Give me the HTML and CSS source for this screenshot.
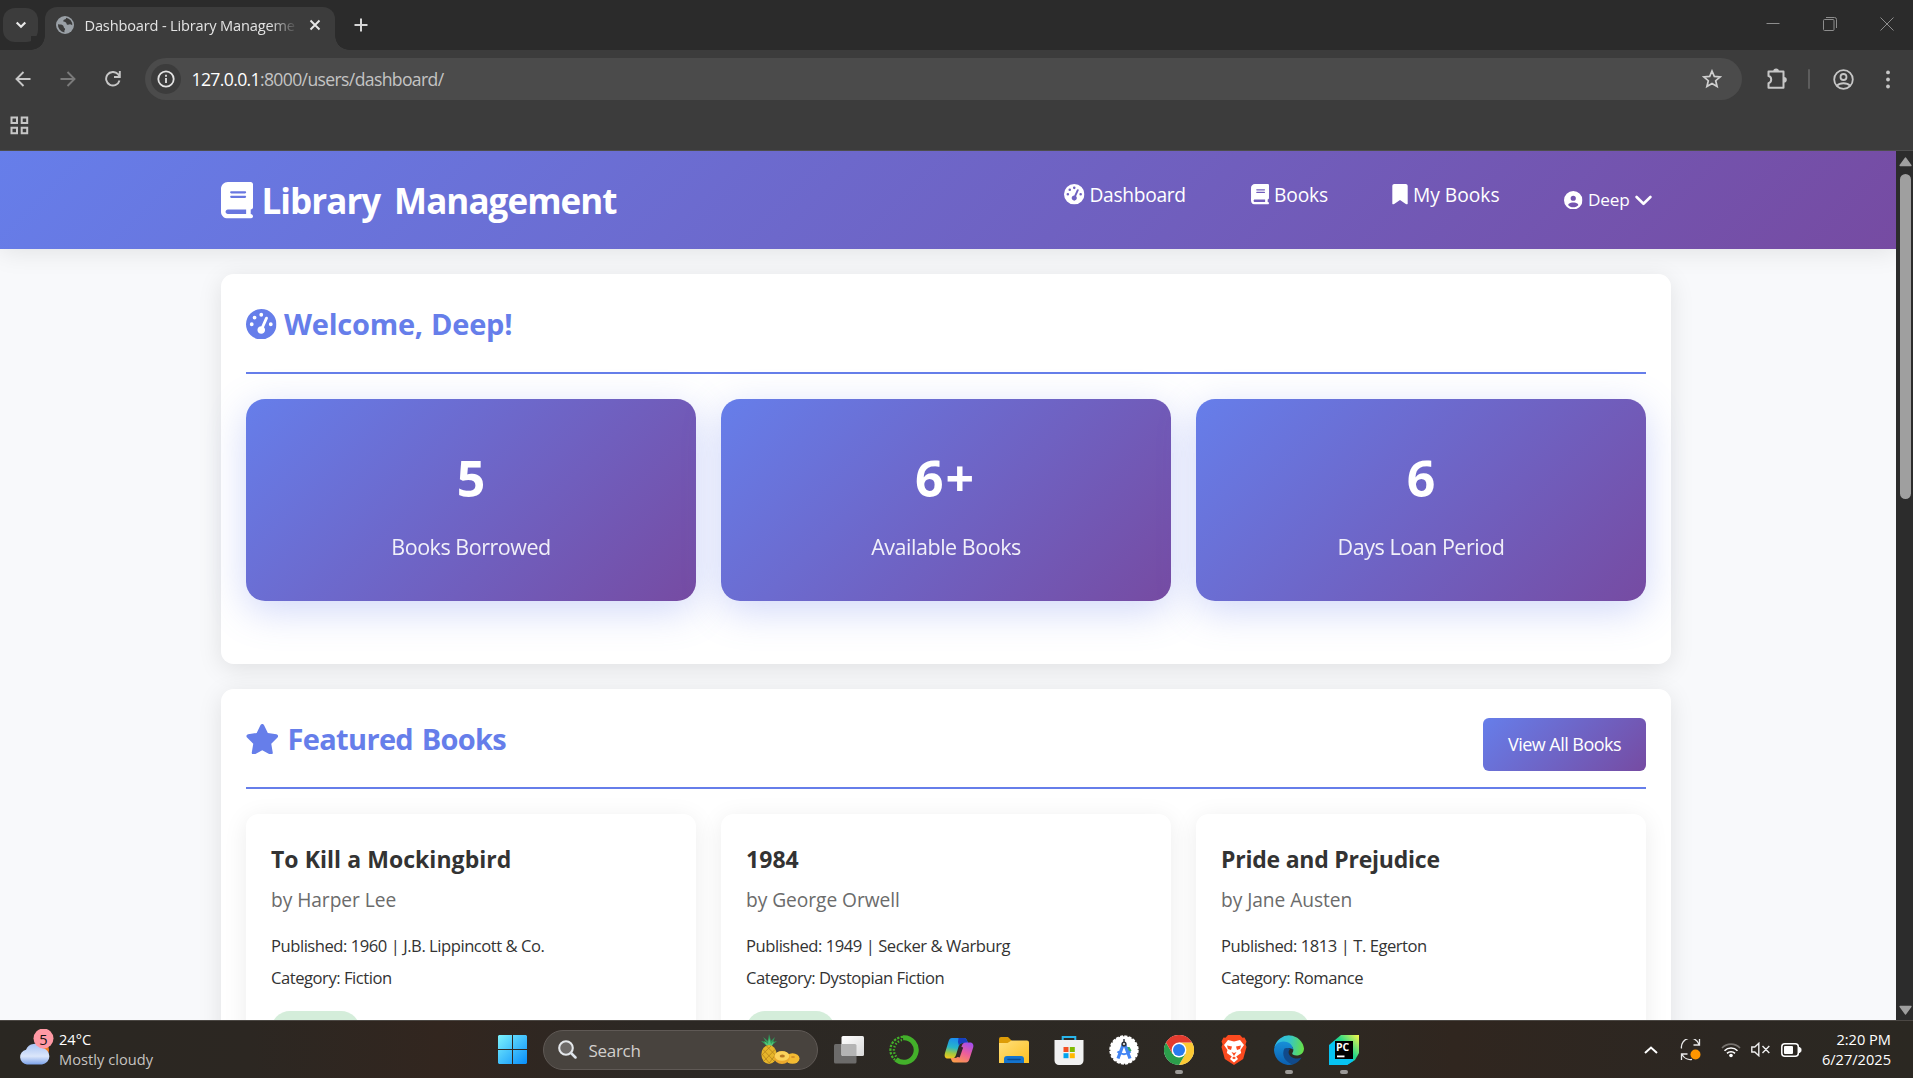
FILE: index.html
```
<!DOCTYPE html>
<html lang="en">
<head>
<meta charset="utf-8">
<title>Dashboard - Library Management</title>
<link rel="stylesheet" href="styles.css">
</head>
<body>
<svg class="defs" aria-hidden="true">
  <symbol id="book" viewBox="0 0 448 512"><path fill-rule="evenodd" d="M96 0C43 0 0 43 0 96V416c0 53 43 96 96 96H384h32c17.7 0 32-14.3 32-32s-14.3-32-32-32V384c17.7 0 32-14.3 32-32V32c0-17.7-14.3-32-32-32H384 96zm0 384H352v64H96c-17.7 0-32-14.3-32-32s14.3-32 32-32zm32-240c0-8.8 7.2-16 16-16H336c8.8 0 16 7.2 16 16s-7.2 16-16 16H144c-8.8 0-16-7.2-16-16zm16 48H336c8.8 0 16 7.2 16 16s-7.2 16-16 16H144c-8.8 0-16-7.2-16-16s7.2-16 16-16z"/></symbol>
  <symbol id="gauge" viewBox="0 0 512 512"><path fill-rule="evenodd" d="M0 256a256 256 0 1 1 512 0A256 256 0 1 1 0 256zM288 96a32 32 0 1 0-64 0 32 32 0 1 0 64 0zM256 416c35.3 0 64-28.7 64-64c0-17.4-6.9-33.1-18.1-44.6L366 161.7c5.3-12.1-.2-26.3-12.3-31.6s-26.3 .2-31.6 12.3L257.9 288c-.6 0-1.3 0-1.9 0c-35.3 0-64 28.7-64 64s28.7 64 64 64zM176 144a32 32 0 1 0-64 0 32 32 0 1 0 64 0zM96 288a32 32 0 1 0 0-64 32 32 0 1 0 0 64zm352-32a32 32 0 1 0-64 0 32 32 0 1 0 64 0z"/></symbol>
  <symbol id="bookmark" viewBox="0 0 384 512"><path d="M0 48V487.700C0 501.100 10.900 512 24.300 512c5 0 9.900-1.500 14-4.400L192 400 345.700 507.600c4.100 2.900 9 4.400 14 4.400c13.400 0 24.300-10.900 24.300-24.300V48c0-26.500-21.500-48-48-48H48C21.500 0 0 21.500 0 48z"/></symbol>
  <symbol id="user" viewBox="0 0 512 512"><path fill-rule="evenodd" d="M399 384.200C376.900 345.800 335.400 320 288 320H224c-47.400 0-88.900 25.800-111 64.200c35.200 39.200 86.200 63.800 143 63.800s107.800-24.700 143-63.800zM0 256a256 256 0 1 1 512 0A256 256 0 1 1 0 256zm256 16a72 72 0 1 0 0-144 72 72 0 1 0 0 144z"/></symbol>
  <symbol id="star" viewBox="0 0 576 512"><path d="M316.900 18C311.600 7 300.400 0 288.100 0s-23.400 7-28.800 18L195 150.300 51.400 171.500c-12 1.800-22 10.200-25.700 21.700s-.7 24.200 7.900 32.700L137.800 329 113.200 474.700c-2 12 3 24.200 12.900 31.300s23 8 33.800 2.300l128.300-68.500 128.300 68.500c10.800 5.700 23.900 4.900 33.800-2.300s14.900-19.300 12.900-31.300L438.500 329 542.700 225.900c8.600-8.500 11.700-21.200 7.900-32.700s-13.700-19.900-25.700-21.700L381.200 150.300 316.900 18z"/></symbol>
</svg>

<div class="browser">
  <div class="tabstrip">
    <div class="tab-search"><svg width="12" height="8" viewBox="0 0 12 8"><path d="M1.700 1.500 6 5.800l4.300-4.300" fill="none" stroke="#e8e8e8" stroke-width="2.200"/></svg></div>
    <div class="tab">
      <svg width="18" height="18" viewBox="0 0 18 18"><circle cx="9" cy="9" r="9" fill="#9aa0a6"/><path d="M2 8.200c2.700.2 4.200.2 5.100 1.300.8 1 .4 2.200 1.500 2.800.8.500.6 1.500-.2 2.200v1.900A7.500 7.500 0 0 1 2 8.200zM10.200 1.700c-.4 1-.2 1.700-1.500 1.800-1.300.2-1.400 1.100-1.300 1.800.2 1 1.600.6 2.500 1.100.9.600.3 2 1.600 2.300 1.200.4 1.600-.6 2.700-.4.900.2 1.500.8 2.100 1A7.500 7.500 0 0 0 10.200 1.700z" fill="#3c3c3c"/></svg>
      <span class="tab-title">Dashboard - Library Manageme</span>
      <svg class="tab-close" width="12" height="12" viewBox="0 0 12 12"><path d="m1.500 1.500 9 9m0-9-9 9" stroke="#e8e8e8" stroke-width="1.900"/></svg>
    </div>
    <svg class="newtab" width="14" height="14" viewBox="0 0 14 14"><path d="M7 .5v13M.5 7h13" stroke="#d6d6d6" stroke-width="2"/></svg>
    <div class="winctl">
      <svg width="14" height="14" viewBox="0 0 14 14"><path d="M.5 6.500h13" stroke="#8d8d8d"/></svg>
      <svg width="14" height="14" viewBox="0 0 14 14" fill="none" stroke="#8d8d8d"><rect x=".5" y="2.500" width="10.500" height="11" rx="1"/><path d="M3 .5h8.500a2 2 0 0 1 2 2V11"/></svg>
      <svg width="14" height="14" viewBox="0 0 14 14"><path d="m.5.5 13 13m0-13-13 13" stroke="#8d8d8d"/></svg>
    </div>
  </div>
  <div class="toolbar">
    <svg class="back" width="16" height="16" viewBox="0 0 16 16" fill="none" stroke="#c7c7c7" stroke-width="1.900"><path d="M15.500 8H2M8.500 1 1.500 8l7 7"/></svg>
    <svg class="fwd" width="16" height="16" viewBox="0 0 16 16" fill="none" stroke="#7a7a7a" stroke-width="1.900"><path d="M.5 8H14M7.500 1l7 7-7 7"/></svg>
    <svg class="reload" width="16" height="16" viewBox="0 0 16 16" fill="none" stroke="#c7c7c7" stroke-width="1.900"><path d="M14.500 9.500A6.800 6.800 0 1 1 13 3.200l1.500 2M14.800 0v6H9"/></svg>
    <div class="omnibox">
      <div class="info"><svg width="18" height="18" viewBox="0 0 18 18"><circle cx="9" cy="9" r="7.700" fill="none" stroke="#e3e3e3" stroke-width="1.800"/><path d="M9 8v5M9 4.800v1.900" stroke="#e3e3e3" stroke-width="1.800"/></svg></div>
      <span class="url"><b>127.0.0.1</b>:8000/users/dashboard/</span>
      <svg class="fav" width="20" height="20" viewBox="0 0 20 20"><path d="m10 2 2.300 5.400 5.900.5-4.500 3.800 1.400 5.800L10 14.400l-5.100 3.100 1.400-5.800L1.800 7.900l5.900-.5z" fill="none" stroke="#cfcfcf" stroke-width="1.700"/></svg>
    </div>
    <svg class="ext" width="22" height="22" viewBox="0 0 22 22"><path d="M2.500 3.500H17.500V19.800H2.500v-4.600c3.600-.7 3.600-6.500 0-7.200z" fill="none" stroke="#c7c7c7" stroke-width="2" stroke-linejoin="round"/><path d="M7.300 3.300a2.800 2.800 0 0 1 5.600 0zM18 9a2.800 2.800 0 0 1 0 5.600z" fill="#c7c7c7"/></svg>
    <i class="sep"></i>
    <svg class="profile" width="21" height="21" viewBox="0 0 21 21" fill="none" stroke="#c7c7c7" stroke-width="1.800"><circle cx="10.500" cy="10.500" r="9.300"/><circle cx="10.500" cy="8" r="3"/><path d="M4 16.700c3-3.300 10-3.300 13 0"/></svg>
    <svg class="dots" width="4" height="19" viewBox="0 0 4 19" fill="#c7c7c7"><circle cx="2" cy="2.400" r="1.900"/><circle cx="2" cy="9.500" r="1.900"/><circle cx="2" cy="16.500" r="1.900"/></svg>
  </div>
  <div class="bookmarks"><svg width="19" height="19" viewBox="0 0 19 19" fill="none" stroke="#c7c7c7" stroke-width="2"><path d="M1.500 1.500h5.500v5.500H1.500zM11.700 1.500h5.500v5.500h-5.500zM1.500 11.700h5.500v5.500H1.500zM11.700 11.700h5.500v5.500h-5.500z"/></svg></div>
</div>

<div class="viewport">
  <div class="page">
    <header class="site-header">
      <h1 class="logo"><svg width="32" height="36.600"><use href="#book"/></svg>Library Management</h1>
      <nav class="nav">
        <a class="n-dash"><svg width="20.500" height="20.500"><use href="#gauge"/></svg>Dashboard</a>
        <a class="n-books"><svg width="18" height="20.500"><use href="#book"/></svg>Books</a>
        <a class="n-my"><svg width="16" height="20.500"><use href="#bookmark"/></svg>My Books</a>
        <a class="n-user"><svg width="18.500" height="18.500"><use href="#user"/></svg>Deep<svg class="chev" width="17" height="11" viewBox="0 0 17 11"><path d="m1.600 2 6.900 6.800L15.400 2" fill="none" stroke="#fff" stroke-width="2.600" stroke-linecap="round" stroke-linejoin="round"/></svg></a>
      </nav>
    </header>
    <main>
      <section class="card">
        <div class="card-head"><h2 class="welcome"><svg width="30.500" height="30.500"><use href="#gauge"/></svg>Welcome, Deep!</h2></div>
        <div class="stats">
          <div class="stat"><div class="num">5</div><div class="label">Books Borrowed</div></div>
          <div class="stat"><div class="num">6<span class="plus">+</span></div><div class="label">Available Books</div></div>
          <div class="stat"><div class="num">6</div><div class="label">Days Loan Period</div></div>
        </div>
      </section>
      <section class="card featured">
        <div class="card-head"><h2><svg class="star" width="34.500" height="30.700"><use href="#star"/></svg>Featured Books</h2><a class="btn">View All Books</a></div>
        <div class="books">
          <article class="book"><h3>To Kill a Mockingbird</h3><p class="author">by Harper Lee</p><p>Published: 1960 | J.B. Lippincott &amp; Co.</p><p>Category: Fiction</p><span class="badge"></span></article>
          <article class="book"><h3>1984</h3><p class="author">by George Orwell</p><p>Published: 1949 | Secker &amp; Warburg</p><p>Category: Dystopian Fiction</p><span class="badge"></span></article>
          <article class="book"><h3 class="snug">Pride and Prejudice</h3><p class="author">by Jane Austen</p><p>Published: 1813 | T. Egerton</p><p>Category: Romance</p><span class="badge"></span></article>
        </div>
      </section>
    </main>
  </div>
  <div class="scrollbar">
    <svg width="13" height="10" viewBox="0 0 13 10"><path d="M6.500 1.200 11.800 8.500H1.200z" fill="#9f9f9f" stroke="#9f9f9f" stroke-width="1.600" stroke-linejoin="round"/></svg>
    <i class="thumb"></i>
    <svg width="13" height="10" viewBox="0 0 13 10"><path d="M6.500 8.800 11.800 1.500H1.200z" fill="#9f9f9f" stroke="#9f9f9f" stroke-width="1.600" stroke-linejoin="round"/></svg>
  </div>
</div>

<footer class="taskbar">
  <div class="weather">
    <svg width="36" height="38" viewBox="0 0 36 38">
      <defs><linearGradient id="cl" x1="0" y1="0" x2="0" y2="1"><stop offset="0" stop-color="#a9c4f5"/><stop offset=".6" stop-color="#dbe6fa"/><stop offset="1" stop-color="#7da3ea"/></linearGradient></defs>
      <circle cx="22" cy="21" r="8" fill="#f47b20"/>
      <path d="M8 35.500a7.500 7.500 0 0 1-1-14.800 9 9 0 0 1 16-1.700 8.300 8.300 0 0 1 0 16.500z" fill="url(#cl)"/>
      <circle cx="24.500" cy="9.500" r="10" fill="#ff99a4"/>
    </svg><span class="count">5</span>
    <div class="wtext"><span>24°C</span><span class="dim">Mostly cloudy</span></div>
  </div>
  <div class="apps">
    <svg class="start" width="29" height="29" viewBox="0 0 29 29"><defs><linearGradient id="wn" x1="0" y1="0" x2="1" y2="1"><stop offset="0" stop-color="#7df3fc"/><stop offset="1" stop-color="#078dfb"/></linearGradient></defs><path d="M1 0h13v14H0V1zM15 0h13l1 1v13H15zM0 15h14v14H1l-1-1zM15 15h14v13l-1 1H15z" fill="url(#wn)"/></svg>
    <div class="search">
      <svg width="19" height="19" viewBox="0 0 19 19"><circle cx="8" cy="8" r="6.800" fill="#6d6a68" stroke="#e4e7ea" stroke-width="2.100"/><path d="m13 13 4.500 4.500" stroke="#dde3ea" stroke-width="2.500" stroke-linecap="round"/></svg>
      <span>Search</span>
      <svg class="pine" width="40" height="31" viewBox="0 0 40 31">
        <path d="M7 12 1 7l5 1-3-5 5 4 1-7 2 7 4-4-2 5 4-1-6 5z" fill="#2f9e5b"/><path d="M6 11 4 7l4 3 1-6 2 6 3-3-2 5z" fill="#57c47c"/>
        <ellipse cx="9" cy="20.500" rx="7.600" ry="9.500" fill="#e5b52a"/><path d="M3 15.500 14 27M6.500 12 16.300 22M2 20l7.500 9.300M15 15.500 4 27M11 12 1.800 21M16 20l-7 9.300" stroke="#b5831b" stroke-width=".8"/>
        <ellipse cx="32.500" cy="24.500" rx="7" ry="5.200" fill="#f3bb32"/><ellipse cx="22" cy="23.500" rx="8" ry="6.500" fill="#eba92d"/><ellipse cx="22" cy="22" rx="7.300" ry="4.800" fill="#fbd35c"/><ellipse cx="22.300" cy="22" rx="2.600" ry="1.500" fill="#b87922"/><ellipse cx="33" cy="23" rx="2" ry="1" fill="#d5912a"/>
      </svg>
    </div>
    <svg class="app" width="30" height="30" viewBox="0 0 30 30"><defs><linearGradient id="tv" x1="0" y1="0" x2="1" y2="1"><stop offset="0" stop-color="#fff"/><stop offset="1" stop-color="#d9d9d9"/></linearGradient></defs><rect x="0" y="9" width="22.500" height="19.500" rx="1.500" fill="#6c6b6a"/><rect x="7.500" y="1" width="22.500" height="20" rx="1.500" fill="url(#tv)"/><path d="M7.500 9H21a1.500 1.500 0 0 1 1.500 1.500V21H9a1.500 1.500 0 0 1-1.500-1.500z" fill="#b4b4b4"/></svg>
    <svg class="app" width="30" height="30" viewBox="0 0 30 30" fill="none" stroke="#43b02a"><path d="M14 2.700a12.300 12.300 0 1 1-7 21.700" stroke-width="5"/><path d="M14 1.800A13.200 13.200 0 0 0 6 25" stroke-width="2.200" stroke-dasharray="2.400 1.300"/><path d="M13 5A10.400 10.400 0 0 0 7.500 22" stroke-width="2.300" stroke-dasharray="1.500 1.700"/></svg>
    <svg class="app" width="30" height="30" viewBox="0 0 30 30"><defs><linearGradient id="c1" x1=".4" y1="0" x2=".2" y2="1"><stop offset="0" stop-color="#1b8cf0"/><stop offset=".45" stop-color="#27b5c9"/><stop offset=".75" stop-color="#a6c93b"/><stop offset="1" stop-color="#f7c51e"/></linearGradient><linearGradient id="c2" x1=".8" y1="0" x2=".3" y2="1"><stop offset="0" stop-color="#a24dee"/><stop offset=".5" stop-color="#ee5e9a"/><stop offset="1" stop-color="#fb9a4c"/></linearGradient></defs><path d="M8 3h12c2.500 0 3 2 4 5h-5c-3 0-4 2-4.700 4.500L12 20c-.8 2.500-2 3.500-4.500 3.500H4c-3 0-4-2-3-5.500l3.500-11.500C5.200 4.300 6 3 8 3z" fill="url(#c1)"/><path d="M14.500 3H20c2.500 0 3 2 4 5h-5c-2 0-3.400 1.200-4 3l-1-4z" fill="#173fbe"/><path d="M22 27.500H10.500c-2.500 0-3-2-3.800-4.500h3.800c2.500 0 4-1.500 4.700-4l2.300-7.500c.8-2.500 2-4 4.500-4H26c3 0 4 2.500 3 5.500L25.500 24c-.7 2.300-1.700 3.500-3.500 3.500z" fill="url(#c2)"/><path d="m17.500 12-3.500 10" stroke="#33242c" stroke-width="3.500"/></svg>
    <svg class="app" width="30" height="30" viewBox="0 0 30 30"><defs><linearGradient id="fo" x1="0" y1="0" x2="1" y2="1"><stop offset="0" stop-color="#ffdf7c"/><stop offset="1" stop-color="#fcc021"/></linearGradient></defs><path d="M0 4a2 2 0 0 1 2-2h7l4 4-2 5H0z" fill="#dd9c07"/><path d="M0 8h8.500l4-2.500H28a2 2 0 0 1 2 2V28H0z" fill="url(#fo)"/><path d="M5 28v-4a3 3 0 0 1 3-3h14a3 3 0 0 1 3 3v4z" fill="#1474ce"/><path d="M9 24.500h12" stroke="#0a4b91" stroke-width="1.500" stroke-linecap="round"/></svg>
    <svg class="app" width="30" height="30" viewBox="0 0 30 30"><path d="M8.700 6V2h12.600v4" fill="none" stroke="#29b6ec" stroke-width="2"/><path d="M.5 5h29v20.500a4.500 4.500 0 0 1-4.500 4.500H5A4.500 4.500 0 0 1 .5 25.500z" fill="#f1f1f1"/><path d="M9.500 12h5v5h-5z" fill="#f25022"/><path d="M15.800 12h5v5h-5z" fill="#7fba00"/><path d="M9.500 18.200h5v5h-5z" fill="#00a4ef"/><path d="M15.800 18.200h5v5h-5z" fill="#ffb900"/></svg>
    <svg class="app" width="30" height="30" viewBox="0 0 30 30"><circle cx="15" cy="15" r="13.700" fill="#fff" stroke="#fff" stroke-width="2" stroke-dasharray="3 1.300"/><path d="M17 12h3.500l2 3.500L20 18z" fill="#34a36a"/><path d="m15 7.500-6 16M15 7.500l6 16" stroke="#4285f4" stroke-width="3.200"/><path d="M8.500 16.500c4 3.500 9 3.500 13 0" fill="none" stroke="#4285f4" stroke-width="2.300"/><circle cx="15" cy="9" r="2.600" fill="#30343c"/><circle cx="15" cy="9" r="1" fill="#fff"/><path d="M15 4v3" stroke="#30343c" stroke-width="1.500"/></svg>
    <div class="running"><svg class="app" width="30" height="30" viewBox="0 0 30 30"><circle cx="15" cy="15" r="15" fill="#fff"/><path d="M28 7.500A15 15 0 0 1 15 30l6.500-11.200L15 7.500z" fill="#fcc934"/><path d="M2 7.500A15 15 0 0 0 15 30l6.500-11.200H8.500z" fill="#2b9e4b"/><path d="M2 7.500a15 15 0 0 1 26 0H15l-6.500 11.300z" fill="#e33b2e"/><circle cx="15" cy="15" r="7.400" fill="#fff"/><circle cx="15" cy="15" r="6" fill="#2a7bee"/></svg><i></i></div>
    <svg class="app" width="30" height="30" viewBox="0 0 30 30"><path d="M9 0h12l2.500 2.700 2-.2 2 4-1 2.800 1 2.700-3.300 12L15 30 5.800 24l-3.300-12 1-2.700-1-2.800 2-4 2 .2z" fill="#fb4a1f"/><path d="m9 5 6 1.500L21 5l4 5-3.500 5 .7 3-5 3.500L19 24l-4 3.500-4-3.500 1.800-2.500-5-3.500.7-3L5 10z" fill="#fff"/><path d="m8 10.500 5 1-1 3.500-3-1zM22 10.500l-5 1 1 3.500 3-1zM12.500 17l2.500 1 2.500-1-2.500 4zM13 23l2-1.500 2 1.500-2 1.300z" fill="#fb4a1f"/></svg>
    <div class="running"><svg class="app" width="30" height="30" viewBox="0 0 30 30"><defs><linearGradient id="e1" x1="0" y1=".3" x2="1" y2=".4"><stop offset="0" stop-color="#2db8ea"/><stop offset=".5" stop-color="#35c5c8"/><stop offset="1" stop-color="#66e047"/></linearGradient><linearGradient id="e2" x1="0" y1="0" x2="0" y2="1"><stop offset="0" stop-color="#178fd8"/><stop offset="1" stop-color="#0b5fb0"/></linearGradient></defs><path d="M.5 12A15 15 0 0 1 30 13.500c0 4.500-3.500 7-7.500 7-3.500 0-5-1.300-4-2.800 2-3 .5-7.700-5-7.700C8 10 3 10 .5 12z" fill="url(#e1)"/><path d="M0 15C0 10 4.500 6.500 9.500 6.500c6 0 9.500 4 9.500 8-4-3-9 0-8.500 5 .4 5 5 9 9 9.700A15 15 0 0 1 0 15z" fill="url(#e2)"/><path d="M10.500 13.500c-3.500 6 .5 14.500 9 15.700 3-1 6.500-3.500 8-6.700-3 1.500-8 1.500-11-1.300-2.600-2.500-2.200-5.500-.4-7.200-2-1.200-4-1.500-5.600-.5z" fill="#114a8b"/></svg><i></i></div>
    <div class="running"><div class="pycharm"><svg class="app" width="30" height="30" viewBox="0 0 30 30"><defs><linearGradient id="pc" x1=".2" y1=".7" x2="1" y2="0"><stop offset="0" stop-color="#07c3f2"/><stop offset=".45" stop-color="#21d789"/><stop offset="1" stop-color="#fcf84a"/></linearGradient></defs><path d="M12 0h18v18l-4 7-8 5H0V10z" fill="url(#pc)"/><path d="M0 11 6 5.500V24h18v2l-6 4H0z" fill="#07c3f2"/><path d="M6 6h18v18H6z"/><path d="M8 20.500h7.500v1.800H8z" fill="#fff"/></svg><span>PC</span></div><i></i></div>
  </div>
  <div class="tray">
    <svg class="t-up" width="14" height="8" viewBox="0 0 14 8"><path d="m1 7 6-5.500L13 7" fill="none" stroke="#fff" stroke-width="2"/></svg>
    <svg class="t-sync" width="22" height="22" viewBox="0 0 22 22" fill="none" stroke="#e8e8e8" stroke-width="1.300"><path d="M1.500 9.500a9 9 0 0 1 17.500-4M19.500 0v6h-6M12 20.300a9 9 0 0 1-10-5M1.500 21v-6h6"/><circle cx="15.500" cy="15.500" r="5" fill="#ff9500" stroke="none"/></svg>
    <svg class="t-wifi" width="20" height="16" viewBox="0 0 20 16" fill="none" stroke="#fff" stroke-width="1.600"><path d="M1 6a12.500 12.500 0 0 1 18 0" stroke="#77736f"/><path d="M3.500 8.700a9.200 9.200 0 0 1 13 0M6 11.400a5.700 5.700 0 0 1 8 0"/><circle cx="10" cy="13.500" r="1.800" fill="#fff" stroke="none"/></svg>
    <svg class="t-vol" width="19" height="15" viewBox="0 0 19 15" fill="none" stroke="#eee" stroke-width="1.400"><path d="M.8 5v5h3l4 3.700V1.300L3.800 5zM11.500 4l6.800 7M18.300 4l-6.800 7"/></svg>
    <svg class="t-bat" width="21" height="14" viewBox="0 0 21 14"><rect x=".8" y=".8" width="16.500" height="12.400" rx="3" fill="none" stroke="#fff" stroke-width="1.500"/><rect x="3" y="3" width="9" height="8" rx="1" fill="#fff"/><path d="M18 4.500c1.500 0 2 .7 2 2.500s-.5 2.500-2 2.500z" fill="#fff" stroke="#fff"/></svg>
    <div class="clock"><span>2:20 PM</span><span>6/27/2025</span></div>
  </div>
</footer>
</body>
</html>
```
FILE: styles.css
```
* { box-sizing: border-box; margin: 0; padding: 0; }
html, body { width: 1913px; height: 1078px; overflow: hidden; }
body { display: flex; flex-direction: column; font-family: "Open Sans", "Noto Sans", sans-serif; color: #333; }
svg { display: block; flex: none; }
.defs { position: absolute; width: 0; height: 0; }
span, a, h1, h2, h3, p { white-space: nowrap; }

/* browser window */
.browser { height: 151px; flex: none; background: #3c3c3c; border-bottom: 1px solid #4d4d4d; }
.tabstrip { height: 50px; background: #2b2b2b; display: flex; align-items: flex-start; }
.tab-search { width: 35px; height: 34px; margin: 8px 0 0 3px; border-radius: 12px; background: #3c3c3c; display: flex; align-items: center; justify-content: center; }
.tab { position: relative; width: 290px; height: 43px; margin: 7px 0 0 7px; border-radius: 12px 12px 0 0; background: #3c3c3c; display: flex; align-items: center; padding: 0 14px 7px 11px; }
.tab::before, .tab::after { content: ""; position: absolute; bottom: 0; width: 14px; height: 14px; }
.tab::before { left: -14px; background: radial-gradient(circle at 0 0, #2b2b2b 13.500px, #3c3c3c 14px); }
.tab::after { right: -14px; background: radial-gradient(circle at 100% 0, #2b2b2b 13.500px, #3c3c3c 14px); }
.tab-title { width: 214px; margin-left: 10.500px; font-size: 14.600px; line-height: 24px; letter-spacing: -.0115em; color: #e3e3e3; -webkit-mask-image: linear-gradient(90deg, #000 185px, transparent 213px); mask-image: linear-gradient(90deg, #000 185px, transparent 213px); }
.tab-close { margin-left: auto; }
.newtab { margin: 18px 0 0 19px; }
.winctl { display: flex; gap: 43px; margin: 17px 19px 0 auto; }
.toolbar { height: 58px; display: flex; align-items: center; background: #3c3c3c; }
.back { margin-left: 14.500px; }
.fwd { margin-left: 29px; }
.reload { margin-left: 29px; }
.omnibox { width: 1597px; height: 42px; margin-left: 24.500px; border-radius: 21px; background: #4b4b4b; display: flex; align-items: center; padding: 0 20px 0 6px; }
.info { width: 30px; height: 30px; border-radius: 50%; background: #3c3c3c; display: flex; align-items: center; justify-content: center; }
.url { margin-left: 10.500px; font-size: 17.600px; line-height: 26px; letter-spacing: -.0365em; color: #c4c4c4; }
.url b { font-weight: 400; color: #fff; }
.fav { margin-left: auto; }
.ext { margin-left: 23.500px; }
.sep { width: 2px; height: 20px; margin-left: 20px; background: #5d5d5d; border-radius: 1px; }
.profile { margin-left: 23px; }
.dots { margin-left: 32px; }
.bookmarks { padding: 8px 0 0 10px; }

/* web page */
.viewport { height: 869px; flex: none; display: flex; overflow: hidden; }
.page { width: 1896px; height: 869px; overflow: hidden; background: #f8f9fb; }
.scrollbar { width: 17px; height: 869px; background: #2c2c2c; display: flex; flex-direction: column; align-items: center; padding: 6px 0 5px 2px; }
.thumb { width: 11px; height: 325px; margin: 7px 0 auto; border-radius: 6px; background: #9f9f9f; }
.site-header { position: relative; height: 98px; display: flex; align-items: center; justify-content: space-between; padding: 0 245px 0 220.500px; background: linear-gradient(135deg, #667eea 0%, #764ba2 100%); box-shadow: 0 2px 25px rgba(0, 0, 0, .1); color: #fff; }
.site-header svg, h2 svg { fill: currentColor; }
.logo { display: flex; align-items: center; gap: 9px; padding-top: 1px; font-size: 35px; font-weight: 700; letter-spacing: -.027em; word-spacing: .16em; line-height: 98px; }
.nav { display: flex; align-items: center; font-size: 19.200px; line-height: 26px; letter-spacing: -.007em; }
.nav a { display: flex; align-items: center; gap: 5px; padding-bottom: 11px; }
.nav .n-dash { width: 187px; letter-spacing: -.016em; }
.nav .n-books { width: 141px; }
.nav .n-my { width: 172px; letter-spacing: 0; }
.nav .n-user { width: 87px; gap: 5.500px; padding: 0; font-size: 17.200px; letter-spacing: -.008em; }
main { padding: 25px 225px 0 221px; }
.card { height: 390px; padding: 25px; border-radius: 12.500px; background: #fff; box-shadow: 0 5px 25px rgba(0, 0, 0, .1); }
.featured { height: 520px; margin-top: 25px; }
.card-head { height: 75px; display: flex; justify-content: space-between; align-items: flex-start; border-bottom: 2px solid #667eea; }
h2 { display: flex; align-items: center; gap: 8.500px; font-size: 29px; line-height: 50px; letter-spacing: -.023em; word-spacing: .06em; color: #667eea; }
h2.welcome { letter-spacing: -.008em; word-spacing: .03em; gap: 7.500px; }
.star { margin-left: -1.500px; }
.btn { width: 163px; height: 53px; margin-top: 4px; border-radius: 6px; background: linear-gradient(135deg, #667eea, #764ba2); color: #fff; text-align: center; font-size: 18px; line-height: 53px; letter-spacing: -.0295em; }
.stats, .books { display: grid; grid-template-columns: repeat(3, 450px); gap: 25px; margin-top: 25px; }
.stat { height: 202px; padding-top: 49px; border-radius: 19px; background: linear-gradient(135deg, #667eea, #764ba2); color: #fff; text-align: center; box-shadow: 0 10px 38px rgba(102, 126, 234, .3); }
.num { font-size: 50px; font-weight: 700; line-height: 60px; }
.plus { display: inline-block; margin: 0 3px 0 2px; }
.label { margin-top: 22px; font-size: 21.500px; line-height: 34px; letter-spacing: -.022em; opacity: .9; }
.book { height: 380px; padding: 29px 25px 0; border-radius: 12.500px; background: #fff; box-shadow: 0 4px 25px rgba(0, 0, 0, .08); font-size: 16.600px; line-height: 32px; letter-spacing: -.028em; color: #333; }
.book h3 { font-size: 23px; line-height: 32px; letter-spacing: .002em; color: #333; }
.book .snug { letter-spacing: -.01em; }
.author { margin: 9px 0 14px; font-size: 19.200px; letter-spacing: -.003em; color: #6b6b6b; }
.badge { display: block; width: 89px; height: 38px; margin-top: 17px; border-radius: 19px; background: #d4edda; }

/* taskbar */
.taskbar { height: 58px; display: flex; align-items: center; background: linear-gradient(90deg, #2a2722 0, #2c2722 13%, #32261f 23%, #2c2824 34%, #2d2923 68%, #30261f 76%, #2c2722 90%, #2b2822 100%); border-top: 1px solid #4b4743; color: #fff; font-size: 14.600px; }
.weather { position: relative; width: 498px; display: flex; align-items: center; padding-left: 19px; }
.count { position: absolute; left: 33.500px; top: -2.500px; width: 20px; text-align: center; line-height: 22px; color: #111; }
.weather svg { margin-top: -4px; }
.wtext { margin: -1px 0 0 4px; display: flex; flex-direction: column; line-height: 20px; }
.dim { color: #c6c3c0; letter-spacing: .003em; }
.apps { display: flex; align-items: center; }
.search { width: 275px; height: 40px; margin: 0 16px 0 16px; border: 1px solid #5f5955; border-radius: 20px; background: #48433e; display: flex; align-items: center; padding-left: 14px; font-size: 17px; letter-spacing: -.0175em; color: #d2cfcd; }
.search span { margin-left: 11.500px; padding-top: 2px; line-height: 24px; }
.pine { margin-left: 119.500px; }
.apps > .app, .running { width: 30px; margin-right: 25px; }
.running { position: relative; }
.running i { position: absolute; left: 11px; top: 35px; width: 8px; height: 4px; border-radius: 2px; background: #9b9997; }
.pycharm { position: relative; }
.pycharm span { position: absolute; left: 7px; top: 6px; font-size: 10.500px; font-weight: 700; line-height: 12px; color: #fff; letter-spacing: -.02em; }
.tray { display: flex; align-items: center; margin-left: auto; padding-right: 22px; }
.t-sync { margin-left: 22px; }
.t-wifi { margin-left: 19px; }
.t-vol { margin-left: 10px; }
.t-bat { margin-left: 11px; }
.clock { width: 89px; display: flex; flex-direction: column; align-items: flex-end; line-height: 20px; margin-top: -1px; }
```
